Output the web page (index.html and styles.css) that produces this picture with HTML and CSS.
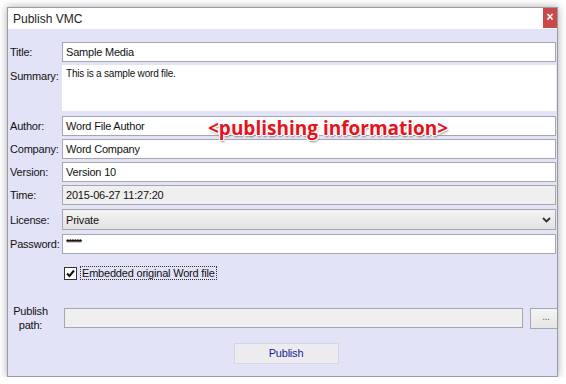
FILE: index.html
```html
<!DOCTYPE html>
<html>
  <head>
    <title>Publish VMC</title>
    <meta charset="UTF-8">
    <link rel="stylesheet" href="styles.css">
  </head>
  <body>
    <div class="window">
      <div class="titlebar">
        <span class="caption">Publish VMC</span>
        <span class="close">&#215;</span>
      </div>
      <div class="content">
        <div class="form">
          <label class="lbl">Title:</label>
          <div class="field">Sample Media</div>

          <label class="lbl top">Summary:</label>
          <div class="field area">This is a sample word file.</div>

          <label class="lbl">Author:</label>
          <div class="field">Word File Author</div>

          <label class="lbl">Company:</label>
          <div class="field">Word Company</div>

          <label class="lbl">Version:</label>
          <div class="field">Version 10</div>

          <label class="lbl">Time:</label>
          <div class="field grey">2015-06-27 11:27:20</div>

          <label class="lbl">License:</label>
          <div class="field select">Private
            <svg class="chev" width="9" height="6" viewBox="0 0 9 6"><path d="M1 1l3.5 3.5L8 1" fill="none" stroke="#333" stroke-width="1.8"/></svg>
          </div>

          <label class="lbl">Password:</label>
          <div class="field pass">******</div>
        </div>

        <div class="check-row">
          <span class="box">
            <svg width="11" height="11" viewBox="0 0 11 11"><path d="M2 5.5l2.5 2.5L9 2.5" fill="none" stroke="#111" stroke-width="2"/></svg>
          </span>
          <span class="check-label">Embedded original Word file</span>
        </div>

        <div class="path-row">
          <label class="path-lbl">Publish<br>path:</label>
          <div class="field grey path"></div>
          <div class="browse">...</div>
        </div>

        <div class="actions">
          <div class="btn">Publish</div>
        </div>
      </div>
    </div>

    <div class="note">&lt;publishing information&gt;</div>
  </body>
</html>
```

FILE: styles.css
```css
* {
  box-sizing: border-box;
}
body {
  margin: 0;
  background: #fff;
  font-family: "Liberation Sans", Arial, sans-serif;
  font-size: 11px;
  letter-spacing: -0.2px;
  color: #111;
  position: relative;
}
.window {
  margin: 7px 0 0 7px;
  width: 551px;
  height: 370px;
  border: 1px solid #9a9aa6;
  background: #e3e3f7;
  box-shadow: 0 0 8px rgba(0,0,0,0.35);
  overflow: hidden;
}
.titlebar {
  height: 21px;
  background: #fff;
  display: flex;
  align-items: center;
  justify-content: space-between;
}
.caption {
  padding-left: 5px;
  font-size: 12px;
  letter-spacing: 0;
  color: #222;
}
.close {
  width: 14px;
  height: 20px;
  align-self: flex-start;
  background: #c9494b;
  color: #fff;
  font-size: 12px;
  font-weight: bold;
  text-align: center;
  line-height: 19px;
}
.content {
  padding: 13px 1px 0 2px;
}
.form {
  display: grid;
  grid-template-columns: 51px 1fr;
  row-gap: 3px;
  column-gap: 1px;
}
.lbl {
  display: flex;
  align-items: center;
}
.lbl.top {
  align-items: flex-start;
  padding-top: 5px;
}
.field {
  height: 20px;
  border: 1px solid #a6a6ae;
  background: #fff;
  padding: 0 3px;
  display: flex;
  align-items: center;
  white-space: nowrap;
}
.field.area {
  height: 46px;
  align-items: flex-start;
  padding-top: 2px;
  font-size: 10px;
  margin-bottom: 2px;
  border-color: #fff;
}
.field.grey {
  background: #efefef;
}
.field.select {
  background: linear-gradient(#f3f3f3, #e3e3e3);
  justify-content: space-between;
  height: 21px;
  margin: 1px 0;
}
.chev {
  margin-right: 1px;
}
.field.pass {
  font-size: 9px;
  font-weight: bold;
  letter-spacing: -1px;
  align-items: flex-start;
  padding-top: 2px;
}
.check-row {
  display: flex;
  align-items: center;
  margin: 12px 0 0 54px;
  height: 14px;
}
.box {
  width: 13px;
  height: 13px;
  border: 1px solid #333;
  background: #fff;
  display: flex;
  align-items: center;
  justify-content: center;
}
.check-label {
  margin-left: 3px;
  padding: 0 1px;
  border: 1px dotted #333;
  line-height: 12px;
}
.path-row {
  display: flex;
  align-items: center;
  margin-top: 24px;
}
.path-lbl {
  width: 53px;
  text-align: center;
  line-height: 14px;
  padding-right: 12px;
}
.field.path {
  width: 459px;
  margin-left: 1px;
}
.browse {
  width: 32px;
  height: 21px;
  margin-left: 7px;
  margin-right: -8px;
  border: 1px solid #a6a6ae;
  background: linear-gradient(#f4f4f4, #e6e6e6);
  color: #666;
  font-size: 10px;
  text-align: center;
  line-height: 16px;
}
.actions {
  display: flex;
  justify-content: center;
  margin-top: 11px;
  padding-left: 6px;
}
.btn {
  width: 105px;
  height: 21px;
  border: 1px solid #d6d6e0;
  background: #ececf0;
  color: #1a1a9a;
  text-align: center;
  line-height: 19px;
}
.note {
  position: absolute;
  left: 208px;
  top: 115px;
  font-family: "Open Sans", "Noto Sans", sans-serif;
  font-weight: bold;
  font-size: 19px;
  letter-spacing: 0;
  color: #e5131b;
  text-shadow: 1px 0 #fff, -1px 0 #fff, 0 1px #fff, 0 -1px #fff,
    1px 1px #fff, -1px -1px #fff, 1px -1px #fff, -1px 1px #fff,
    1px 2px 2px rgba(0,0,0,0.45);
}
```
